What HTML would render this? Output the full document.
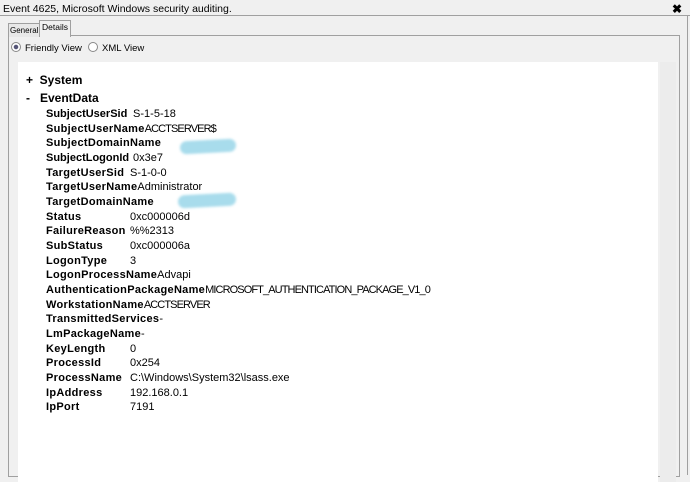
<!DOCTYPE html>
<html><head><style>
body{margin:0;width:690px;height:471px;background:#f0f0f0;font-family:"Liberation Sans",sans-serif;position:relative;overflow:hidden}
.t{position:absolute;left:3px;top:3px;font-size:10.5px;color:#000}
.x{position:absolute;left:672px;top:2px;font-size:12px;font-weight:bold}
.hl{position:absolute;left:0;top:15px;width:690px;height:1px;background:#a0a0a0}
.tab{position:absolute;top:22px;height:13px;font-size:8px;border:1px solid #a0a0a0;border-bottom:none;padding:0 1px;line-height:13px;background:#e8e8e8;white-space:nowrap}
.panel{position:absolute;left:8px;top:35px;width:670px;height:440px;border:1px solid #a0a0a0;background:#f0f0f0}
.r{position:absolute;top:42px;font-size:9.5px}
.rad{display:inline-block;width:8px;height:8px;border:1px solid #888;border-radius:50%;vertical-align:-1px;margin-right:4px;background:#fff}
.white{position:absolute;left:18px;top:62px;width:640px;height:420px;background:#fff}
.sb{position:absolute;left:660px;top:62px;width:16px;height:420px;background:#ececec}
.h{position:absolute;left:26px;font-size:12px;font-weight:bold}
.row{position:absolute;left:46px;font-size:11px;white-space:nowrap}
.row b{display:inline-block;min-width:84px;font-size:11px;letter-spacing:0.3px}
.row b.s{letter-spacing:0}
.u{letter-spacing:-0.9px}
.blob{position:absolute;height:13px;background:#a8dcec;border-radius:7px;filter:blur(1.2px);transform:rotate(-3deg)}
.or{position:absolute;left:687px;top:15px;width:1px;height:460px;background:#a0a0a0}
</style></head><body>
<div class="t">Event 4625, Microsoft Windows security auditing.</div>
<div class="x">✖</div>
<div class="hl"></div>
<div class="or"></div>
<div class="panel"></div>
<div class="tab" style="left:8px;top:23px;width:28px">General</div>
<div class="tab" style="left:39px;top:20px;height:16px;background:#f0f0f0;padding:0 2px;font-size:8.5px">Details</div>
<div class="r" style="left:11px"><span class="rad" style="background:radial-gradient(#557 35%,#fff 45%)"></span>Friendly View</div>
<div class="r" style="left:88px"><span class="rad"></span>XML View</div>
<div class="white"></div>
<div class="sb"></div>
<div class="h" style="top:73px">+&nbsp;&nbsp;System</div>
<div class="h" style="top:91px">-&nbsp;&nbsp;&nbsp;EventData</div>
<div class="row" style="top:108px"><b class="s">SubjectUserSid</b> S-1-5-18</div>
<div class="row" style="top:123px"><b>SubjectUserName</b><span class="u">ACCTSERVER$</span></div>
<div class="row" style="top:137px"><b>SubjectDomainName</b></div>
<div class="row" style="top:152px"><b class="s">SubjectLogonId</b> 0x3e7</div>
<div class="row" style="top:167px"><b>TargetUserSid</b>S-1-0-0</div>
<div class="row" style="top:181px"><b>TargetUserName</b>Administrator</div>
<div class="row" style="top:196px"><b>TargetDomainName</b></div>
<div class="row" style="top:211px"><b>Status</b>0xc000006d</div>
<div class="row" style="top:225px"><b>FailureReason</b>%%2313</div>
<div class="row" style="top:240px"><b>SubStatus</b>0xc000006a</div>
<div class="row" style="top:255px"><b>LogonType</b>3</div>
<div class="row" style="top:269px"><b>LogonProcessName</b>Advapi</div>
<div class="row" style="top:284px"><b>AuthenticationPackageName</b><span class="u">MICROSOFT_AUTHENTICATION_PACKAGE_V1_0</span></div>
<div class="row" style="top:299px"><b>WorkstationName</b><span class="u">ACCTSERVER</span></div>
<div class="row" style="top:313px"><b>TransmittedServices</b>-</div>
<div class="row" style="top:328px"><b>LmPackageName</b>-</div>
<div class="row" style="top:343px"><b>KeyLength</b>0</div>
<div class="row" style="top:357px"><b>ProcessId</b>0x254</div>
<div class="row" style="top:372px"><b>ProcessName</b>C:\Windows\System32\lsass.exe</div>
<div class="row" style="top:387px"><b>IpAddress</b>192.168.0.1</div>
<div class="row" style="top:401px"><b>IpPort</b>7191</div>
<div class="blob" style="left:180px;top:140px;width:56px"></div>
<div class="blob" style="left:178px;top:194px;width:58px"></div>
</body></html>
